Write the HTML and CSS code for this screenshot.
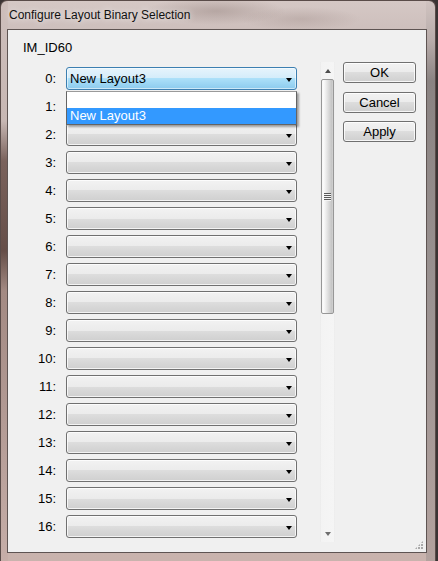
FILE: index.html
```html
<!DOCTYPE html>
<html>
<head>
<meta charset="utf-8">
<link rel="stylesheet" href="styles.css">
</head>
<body>
<div class="window">
  <div class="titlebar">Configure Layout Binary Selection</div>
  <div class="client">
    <div class="heading">IM_ID60</div>
    <div class="main">
      <div class="rows">
        <div class="row"><span class="lbl">0:</span><div class="combo focused"><span class="val">New Layout3</span><span class="arrow"></span>
          <div class="dropdown"><div class="item"></div><div class="item sel">New Layout3</div></div></div></div>
        <div class="row"><span class="lbl">1:</span><div class="combo"><span class="arrow"></span></div></div>
        <div class="row"><span class="lbl">2:</span><div class="combo"><span class="arrow"></span></div></div>
        <div class="row"><span class="lbl">3:</span><div class="combo"><span class="arrow"></span></div></div>
        <div class="row"><span class="lbl">4:</span><div class="combo"><span class="arrow"></span></div></div>
        <div class="row"><span class="lbl">5:</span><div class="combo"><span class="arrow"></span></div></div>
        <div class="row"><span class="lbl">6:</span><div class="combo"><span class="arrow"></span></div></div>
        <div class="row"><span class="lbl">7:</span><div class="combo"><span class="arrow"></span></div></div>
        <div class="row"><span class="lbl">8:</span><div class="combo"><span class="arrow"></span></div></div>
        <div class="row"><span class="lbl">9:</span><div class="combo"><span class="arrow"></span></div></div>
        <div class="row"><span class="lbl">10:</span><div class="combo"><span class="arrow"></span></div></div>
        <div class="row"><span class="lbl">11:</span><div class="combo"><span class="arrow"></span></div></div>
        <div class="row"><span class="lbl">12:</span><div class="combo"><span class="arrow"></span></div></div>
        <div class="row"><span class="lbl">13:</span><div class="combo"><span class="arrow"></span></div></div>
        <div class="row"><span class="lbl">14:</span><div class="combo"><span class="arrow"></span></div></div>
        <div class="row"><span class="lbl">15:</span><div class="combo"><span class="arrow"></span></div></div>
        <div class="row"><span class="lbl">16:</span><div class="combo"><span class="arrow"></span></div></div>
      </div>
      <div class="scrollbar">
        <div class="sb-btn"><span class="sb-up"></span></div>
        <div class="thumb"><span class="grip"></span></div>
        <div class="sb-space"></div>
        <div class="sb-btn"><span class="sb-down"></span></div>
      </div>
      <div class="buttons">
        <div class="btn">OK</div>
        <div class="btn">Cancel</div>
        <div class="btn">Apply</div>
      </div>
    </div>
    <div class="sizegrip"></div>
  </div>
</div>
</body>
</html>
```
FILE: styles.css
```css
html, body {
  margin: 0;
  padding: 0;
}
body {
  width: 438px;
  height: 561px;
  overflow: hidden;
  background: #3b3434;
  font-family: "Liberation Sans", Arial, sans-serif;
  font-size: 13px;
  color: #000;
}
.window {
  width: 436px;
  height: 561px;
  box-sizing: border-box;
  border-radius: 7px 7px 0 0;
  border: 1px solid #5a4c49;
  border-bottom: none;
  background:
    linear-gradient(to bottom, #cdbebb 0, #c7b7b3 120px, #7a625c 160px, #654e48 250px, #a38a83 290px, #b09892 400px, #c6aea8 561px) left top / 7px 100% no-repeat,
    linear-gradient(to bottom, #d0c3c0 0, #b8acaa 40px, #8a8382 80px, #9b9392 300px, #b3a29e 561px) right top / 9px 100% no-repeat,
    radial-gradient(ellipse 70px 14px at 215px 10px, rgba(130,110,105,0.35), rgba(130,110,105,0)) ,
    radial-gradient(ellipse 60px 12px at 300px 18px, rgba(140,120,115,0.25), rgba(140,120,115,0)),
    linear-gradient(to bottom, #d5c8c5 0, #cdbfbc 29px, #c9b3ad 561px);
  display: flex;
  flex-direction: column;
}
.titlebar {
  height: 28px;
  line-height: 29px;
  padding-left: 8px;
  font-size: 12px;
  color: #111;
  text-shadow: 0 0 6px rgba(255,255,255,0.9);
  white-space: nowrap;
}
.client {
  position: relative;
  margin: 0 8px 0 6px;
  height: 524px;
  box-sizing: border-box;
  border: 1px solid #5e5452;
  background: #f0f0f0;
}
.heading {
  padding: 10px 0 0 15px;
  line-height: 16px;
  height: 16px;
}
.main {
  margin-top: 6px;
  height: 480px;
  display: flex;
  align-items: flex-start;
}
.rows {
  width: 312px;
  height: 480px;
  overflow: visible;
  box-sizing: border-box;
  padding-top: 5px;
  display: flex;
  flex-direction: column;
  gap: 5px;
}
.row {
  display: flex;
  align-items: center;
  height: 23px;
  flex: none;
}
.lbl {
  width: 48px;
  text-align: right;
  margin-right: 10px;
  line-height: 16px;
}
.combo {
  position: relative;
  width: 231px;
  height: 23px;
  box-sizing: border-box;
  border: 1px solid #707070;
  border-radius: 3px;
  background: linear-gradient(to bottom, #f2f2f2 0%, #ebebeb 50%, #dddddd 50%, #cfcfcf 100%);
  box-shadow: inset 0 0 0 1px rgba(255,255,255,0.75);
  display: flex;
  align-items: center;
}
.combo.focused {
  border-color: #3c7fb1;
  background: linear-gradient(to bottom, #e6f4fc 0%, #d3ecfa 50%, #ace0f9 50%, #8ccbee 100%);
  box-shadow: inset 0 0 0 1px rgba(255,255,255,0.55);
}
.val {
  padding-left: 3px;
  line-height: 16px;
  white-space: nowrap;
}
.arrow {
  position: absolute;
  right: 4px;
  top: 10px;
  width: 0;
  height: 0;
  border-top: 4px solid #000;
  border-left: 3.5px solid transparent;
  border-right: 3.5px solid transparent;
}
.dropdown {
  position: absolute;
  left: -1px;
  top: 23px;
  width: 231px;
  box-sizing: border-box;
  border: 1px solid #646464;
  border-top-color: #9a9a9a;
  background: #fff;
  box-shadow: 2px 2px 2px rgba(0,0,0,0.35);
  z-index: 5;
}
.item {
  height: 16px;
  line-height: 16px;
  padding-left: 3px;
}
.item.sel {
  background: #3399ff;
  color: #fff;
}
.scrollbar {
  width: 15px;
  height: 480px;
  flex: none;
  box-sizing: border-box;
  background: linear-gradient(to right, #e6e6e6 0, #f3f3f3 1px, #f5f5f5 14px, #e6e6e6 15px);
  display: flex;
  flex-direction: column;
  align-items: center;
}
.sb-btn {
  height: 17px;
  width: 15px;
  flex: none;
  display: flex;
  align-items: center;
  justify-content: center;
}
.sb-up {
  width: 0;
  height: 0;
  border-bottom: 4px solid #4d4d4d;
  border-left: 3.5px solid transparent;
  border-right: 3.5px solid transparent;
}
.sb-down {
  width: 0;
  height: 0;
  border-top: 4px solid #6e6e6e;
  border-left: 3.5px solid transparent;
  border-right: 3.5px solid transparent;
}
.thumb {
  width: 13px;
  height: 235px;
  flex: none;
  box-sizing: border-box;
  border: 1px solid #979797;
  border-radius: 2px;
  background: linear-gradient(to right, #f6f6f6 0%, #fbfbfb 15%, #e6e6e6 45%, #cfcfcf 75%, #c4c4c4 90%, #d6d6d6 100%);
  display: flex;
  align-items: center;
  justify-content: center;
}
.grip {
  width: 7px;
  height: 8px;
  margin-left: -1px;
  background: repeating-linear-gradient(to bottom, #5a5a5a 0, #5a5a5a 1px, #f4f4f4 1px, #f4f4f4 2px);
}
.sb-space {
  flex: 1;
}
.buttons {
  margin-left: 8px;
  width: 73px;
  display: flex;
  flex-direction: column;
  gap: 8.5px;
}
.btn {
  height: 21px;
  box-sizing: border-box;
  border: 1px solid #707070;
  border-radius: 3px;
  background: linear-gradient(to bottom, #f2f2f2 0%, #ebebeb 50%, #dddddd 50%, #cfcfcf 100%);
  box-shadow: inset 0 0 0 1px rgba(255,255,255,0.8);
  text-align: center;
  line-height: 19px;
}
.sizegrip {
  position: absolute;
  right: 3px;
  bottom: 3px;
  width: 8px;
  height: 8px;
  background:
    radial-gradient(circle at 1px 1px, #a9a9a9 0.9px, transparent 1.1px) 0 0 / 3px 3px;
  clip-path: polygon(100% 0, 100% 100%, 0 100%);
}
```
